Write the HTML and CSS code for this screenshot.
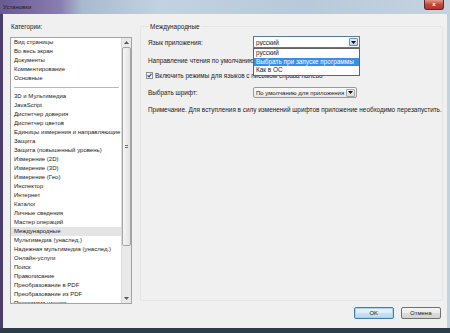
FILE: index.html
```html
<!DOCTYPE html>
<html lang="ru">
<head>
    <meta charset="UTF-8">
    <title>Установки</title>
    <link rel="stylesheet" href="styles.css">
</head>
<body>
<div class="window">
    <div class="titlebar">
        <span class="title">Установки</span>
        <span class="close">x</span>
    </div>
    <div class="frame">
        <div class="client">
            <div class="main">
                <div class="categories">
                    <div class="caption">Категории:</div>
                    <div class="listbox">
                        <ul class="items">
                            <li>Вид страницы</li>
                            <li>Во весь экран</li>
                            <li>Документы</li>
                            <li>Комментирование</li>
                            <li>Основные</li>
                            <li class="sep"></li>
                            <li>3D и Мультимедиа</li>
                            <li>JavaScript</li>
                            <li>Диспетчер доверия</li>
                            <li>Диспетчер цветов</li>
                            <li>Единицы измерения и направляющие</li>
                            <li>Защита</li>
                            <li>Защита (повышенный уровень)</li>
                            <li>Измерение (2D)</li>
                            <li>Измерение (3D)</li>
                            <li>Измерение (Гео)</li>
                            <li>Инспектор</li>
                            <li>Интернет</li>
                            <li>Каталог</li>
                            <li>Личные сведения</li>
                            <li>Мастер операций</li>
                            <li class="selected">Международные</li>
                            <li>Мультимедиа (унаслед.)</li>
                            <li>Надежная мультимедиа (унаслед.)</li>
                            <li>Онлайн-услуги</li>
                            <li>Поиск</li>
                            <li>Правописание</li>
                            <li>Преобразование в PDF</li>
                            <li>Преобразование из PDF</li>
                            <li>Программа чтения</li>
                        </ul>
                        <div class="scrollbar">
                            <div class="sb-btn">
                                <svg width="5" height="3" viewBox="0 0 5 3"><path d="M0 3h5L2.5 0z"/></svg>
                            </div>
                            <div class="sb-track">
                                <div class="sb-thumb"><span class="grip"></span></div>
                            </div>
                            <div class="sb-btn">
                                <svg width="5" height="3" viewBox="0 0 5 3"><path d="M0 0h5L2.5 3z"/></svg>
                            </div>
                        </div>
                    </div>
                </div>

                <fieldset class="group">
                    <legend>Международные</legend>
                    <div class="rows">
                        <div class="row row-lang">
                            <label>Язык приложения:</label>
                            <div class="combo combo-open">
                                <span class="value">русский</span>
                                <span class="drop">
                                    <svg width="5" height="3" viewBox="0 0 5 3"><path d="M0 0h5L2.5 3z"/></svg>
                                </span>
                                <ul class="dropdown">
                                    <li>русский</li>
                                    <li class="hot">Выбрать при запуске программы</li>
                                    <li>Как в ОС</li>
                                </ul>
                            </div>
                        </div>
                        <div class="row row-dir">
                            <label>Направление чтения по умолчанию:</label>
                        </div>
                        <div class="row row-check">
                            <span class="checkbox">
                                <svg width="5" height="5" viewBox="0 0 5 5"><path d="M0.6 2.4L2 3.9L4.4 0.8" fill="none" stroke="#2a3f66" stroke-width="1.1"/></svg>
                            </span>
                            <span>Включить режимы для языков с письмом справа налево</span>
                        </div>
                        <div class="row row-font">
                            <label>Выбрать шрифт:</label>
                            <div class="combo combo-btn">
                                <span class="value">По умолчанию для приложения</span>
                                <span class="drop">
                                    <svg width="5" height="3" viewBox="0 0 5 3"><path d="M0 0h5L2.5 3z"/></svg>
                                </span>
                            </div>
                        </div>
                        <div class="row note">
                            Примечание. Для вступления в силу изменений шрифтов приложение необходимо перезапустить.
                        </div>
                    </div>
                </fieldset>
            </div>

            <div class="buttons">
                <button class="btn btn-default">OK</button>
                <button class="btn">Отмена</button>
            </div>
        </div>
    </div>
</div>
</body>
</html>
```

FILE: styles.css
```css
body {
    margin: 0;
    overflow: hidden;
    font-family: "Liberation Sans", Arial, sans-serif;
    font-size: 6.3px;
    color: #222;
}

.window {
    width: 450px;
    height: 333px;
    display: flex;
    flex-direction: column;
}

.titlebar {
    height: 14px;
    display: flex;
    justify-content: space-between;
    background: linear-gradient(90deg, #6a5a92 0, #8a7db0 60px, #a9b9cf 82px, #c3d2e2 160px, #b7c9da 300px, #c6d3df 450px);
}

.title {
    padding: 3px 0 0 3px;
    font-size: 6px;
    line-height: 8px;
    color: #1b1b2b;
}

.close {
    width: 20px;
    height: 10px;
    margin-right: 6px;
    background: linear-gradient(#e09a8a, #c4463a 50%, #b5372c);
    border: 1px solid #5a2a2a;
    border-top: none;
    border-radius: 0 0 3px 3px;
    color: white;
    font-size: 6px;
    font-weight: bold;
    line-height: 9px;
    text-align: center;
    box-sizing: border-box;
}

.frame {
    flex: 1;
    display: flex;
    padding: 0 6px 5px 3px;
    background:
        linear-gradient(0deg, #2e3b48 5px, transparent 5px),
        linear-gradient(90deg, #4a3d6a 3px, #c4d2de 3px);
}

.client {
    flex: 1;
    display: flex;
    flex-direction: column;
    background: #f0f0f0;
}

.main {
    flex: 1;
    display: flex;
    gap: 8px;
    padding-left: 7px;
}

.categories {
    width: 122px;
    padding-top: 8px;
}

.caption {
    line-height: 9px;
    padding-left: 1px;
    margin-bottom: 6px;
}

.listbox {
    height: 267px;
    display: flex;
    background: white;
    border: 1px solid #a3a3a3;
    box-sizing: border-box;
}

.items {
    flex: 1;
    margin: 0;
    padding: 0;
    list-style: none;
    overflow: hidden;
    font-size: 6px;
}

.items li {
    height: 9px;
    line-height: 9px;
    padding-left: 3px;
    white-space: nowrap;
}

.items .sep {
    margin: 0 2px 0 3px;
    padding: 0;
    background: linear-gradient(transparent 4px, #a8bfcb 4px, #a8bfcb 5px, transparent 5px);
}

.items .selected {
    background: #e4e4e4;
}

.scrollbar {
    width: 9px;
    display: flex;
    flex-direction: column;
    background: #e9e9e9;
    border-left: 1px solid #dcdcdc;
}

.sb-btn {
    height: 9px;
    display: flex;
    align-items: center;
    justify-content: center;
    fill: #5a5a5a;
}

.sb-track {
    flex: 1;
}

.sb-thumb {
    height: 199px;
    display: flex;
    align-items: center;
    justify-content: center;
    background: linear-gradient(90deg, #f6f6f6, #e2e2e2);
    border: 1px solid #a4a4a4;
    border-radius: 2px;
    box-sizing: border-box;
}

.grip {
    width: 3px;
    height: 3px;
    background: repeating-linear-gradient(#6f6f6f 0, #6f6f6f 1px, transparent 1px, transparent 2px);
}

.group {
    flex: 1;
    margin: 8px 4px 6px 0;
    padding: 0 0 0 7px;
    font-size: 6.4px;
    border: 1px solid #e3e6e9;
    border-radius: 2px;
    box-sizing: border-box;
}

.group legend {
    padding: 0 1px;
    margin-left: 1px;
    line-height: 9px;
}

.rows {
    display: flex;
    flex-direction: column;
    padding-top: 5px;
}

.row {
    display: flex;
    align-items: center;
    white-space: nowrap;
}

.row label {
    width: 105px;
}

.row-lang {
    height: 12px;
}

.row-dir {
    height: 12px;
    margin-top: 6px;
}

.row-check {
    height: 10px;
    margin-top: 4px;
    margin-left: -2px;
    gap: 2px;
}

.row-font {
    height: 11px;
    margin-top: 7px;
}

.note {
    height: 10px;
    margin-top: 6px;
}

.checkbox {
    width: 7px;
    height: 7px;
    display: flex;
    align-items: center;
    justify-content: center;
    background: linear-gradient(#e9edf2, #ffffff);
    border: 1px solid #8e8f8f;
    box-sizing: border-box;
}

.combo {
    position: relative;
    display: flex;
    align-items: center;
    background: white;
    box-sizing: border-box;
}

.combo-open {
    width: 107px;
    height: 12px;
    border: 1px solid #56789a;
}

.combo .value {
    flex: 1;
    padding-left: 2px;
    overflow: hidden;
    white-space: nowrap;
}

.combo .drop {
    display: flex;
    align-items: center;
    justify-content: center;
    fill: #111;
}

.combo-open .drop {
    width: 9px;
    height: 8px;
    margin-right: 1px;
    background: linear-gradient(#dfeefb, #b6d6f0);
    border: 1px solid #6d91b4;
    border-radius: 1px;
    box-sizing: border-box;
}

.dropdown {
    position: absolute;
    top: 11px;
    left: -1px;
    width: 107px;
    margin: 0;
    padding: 0;
    list-style: none;
    background: white;
    border: 1px solid #646464;
    box-sizing: border-box;
}

.dropdown li {
    height: 8.5px;
    line-height: 8.5px;
    padding-left: 2px;
}

.dropdown .hot {
    background: #3a8ee6;
    color: white;
}

.combo-btn {
    width: 104px;
    height: 11px;
    padding-right: 1px;
    background: linear-gradient(#fbfbfb, #e8e8e8);
    border: 1px solid #9a9a9a;
    border-radius: 2px;
}

.combo-btn .value {
    font-size: 6px;
}

.combo-btn .drop {
    width: 9px;
    height: 8px;
    margin-left: 1px;
    background: linear-gradient(#f5f5f5, #dcdcdc);
    border: 1px solid #a5a5a5;
    border-radius: 1px;
    box-sizing: border-box;
}

.buttons {
    display: flex;
    justify-content: flex-end;
    gap: 7px;
    padding: 0 6px 9px 0;
}

.btn {
    width: 40px;
    height: 12px;
    padding: 0;
    font-family: inherit;
    font-size: 6px;
    color: #222;
    background: linear-gradient(#f3f3f3 0, #ebebeb 50%, #dddddd 50%, #d2d2d2 100%);
    border: 1px solid #707070;
    border-radius: 2px;
}

.btn-default {
    background: linear-gradient(#eaf5fc 0, #dcecf8 50%, #c9e2f5 50%, #bcd9f0 100%);
    border-color: #3c7fb1;
    box-shadow: inset 0 0 0 1px #a8d4f0;
}
```
